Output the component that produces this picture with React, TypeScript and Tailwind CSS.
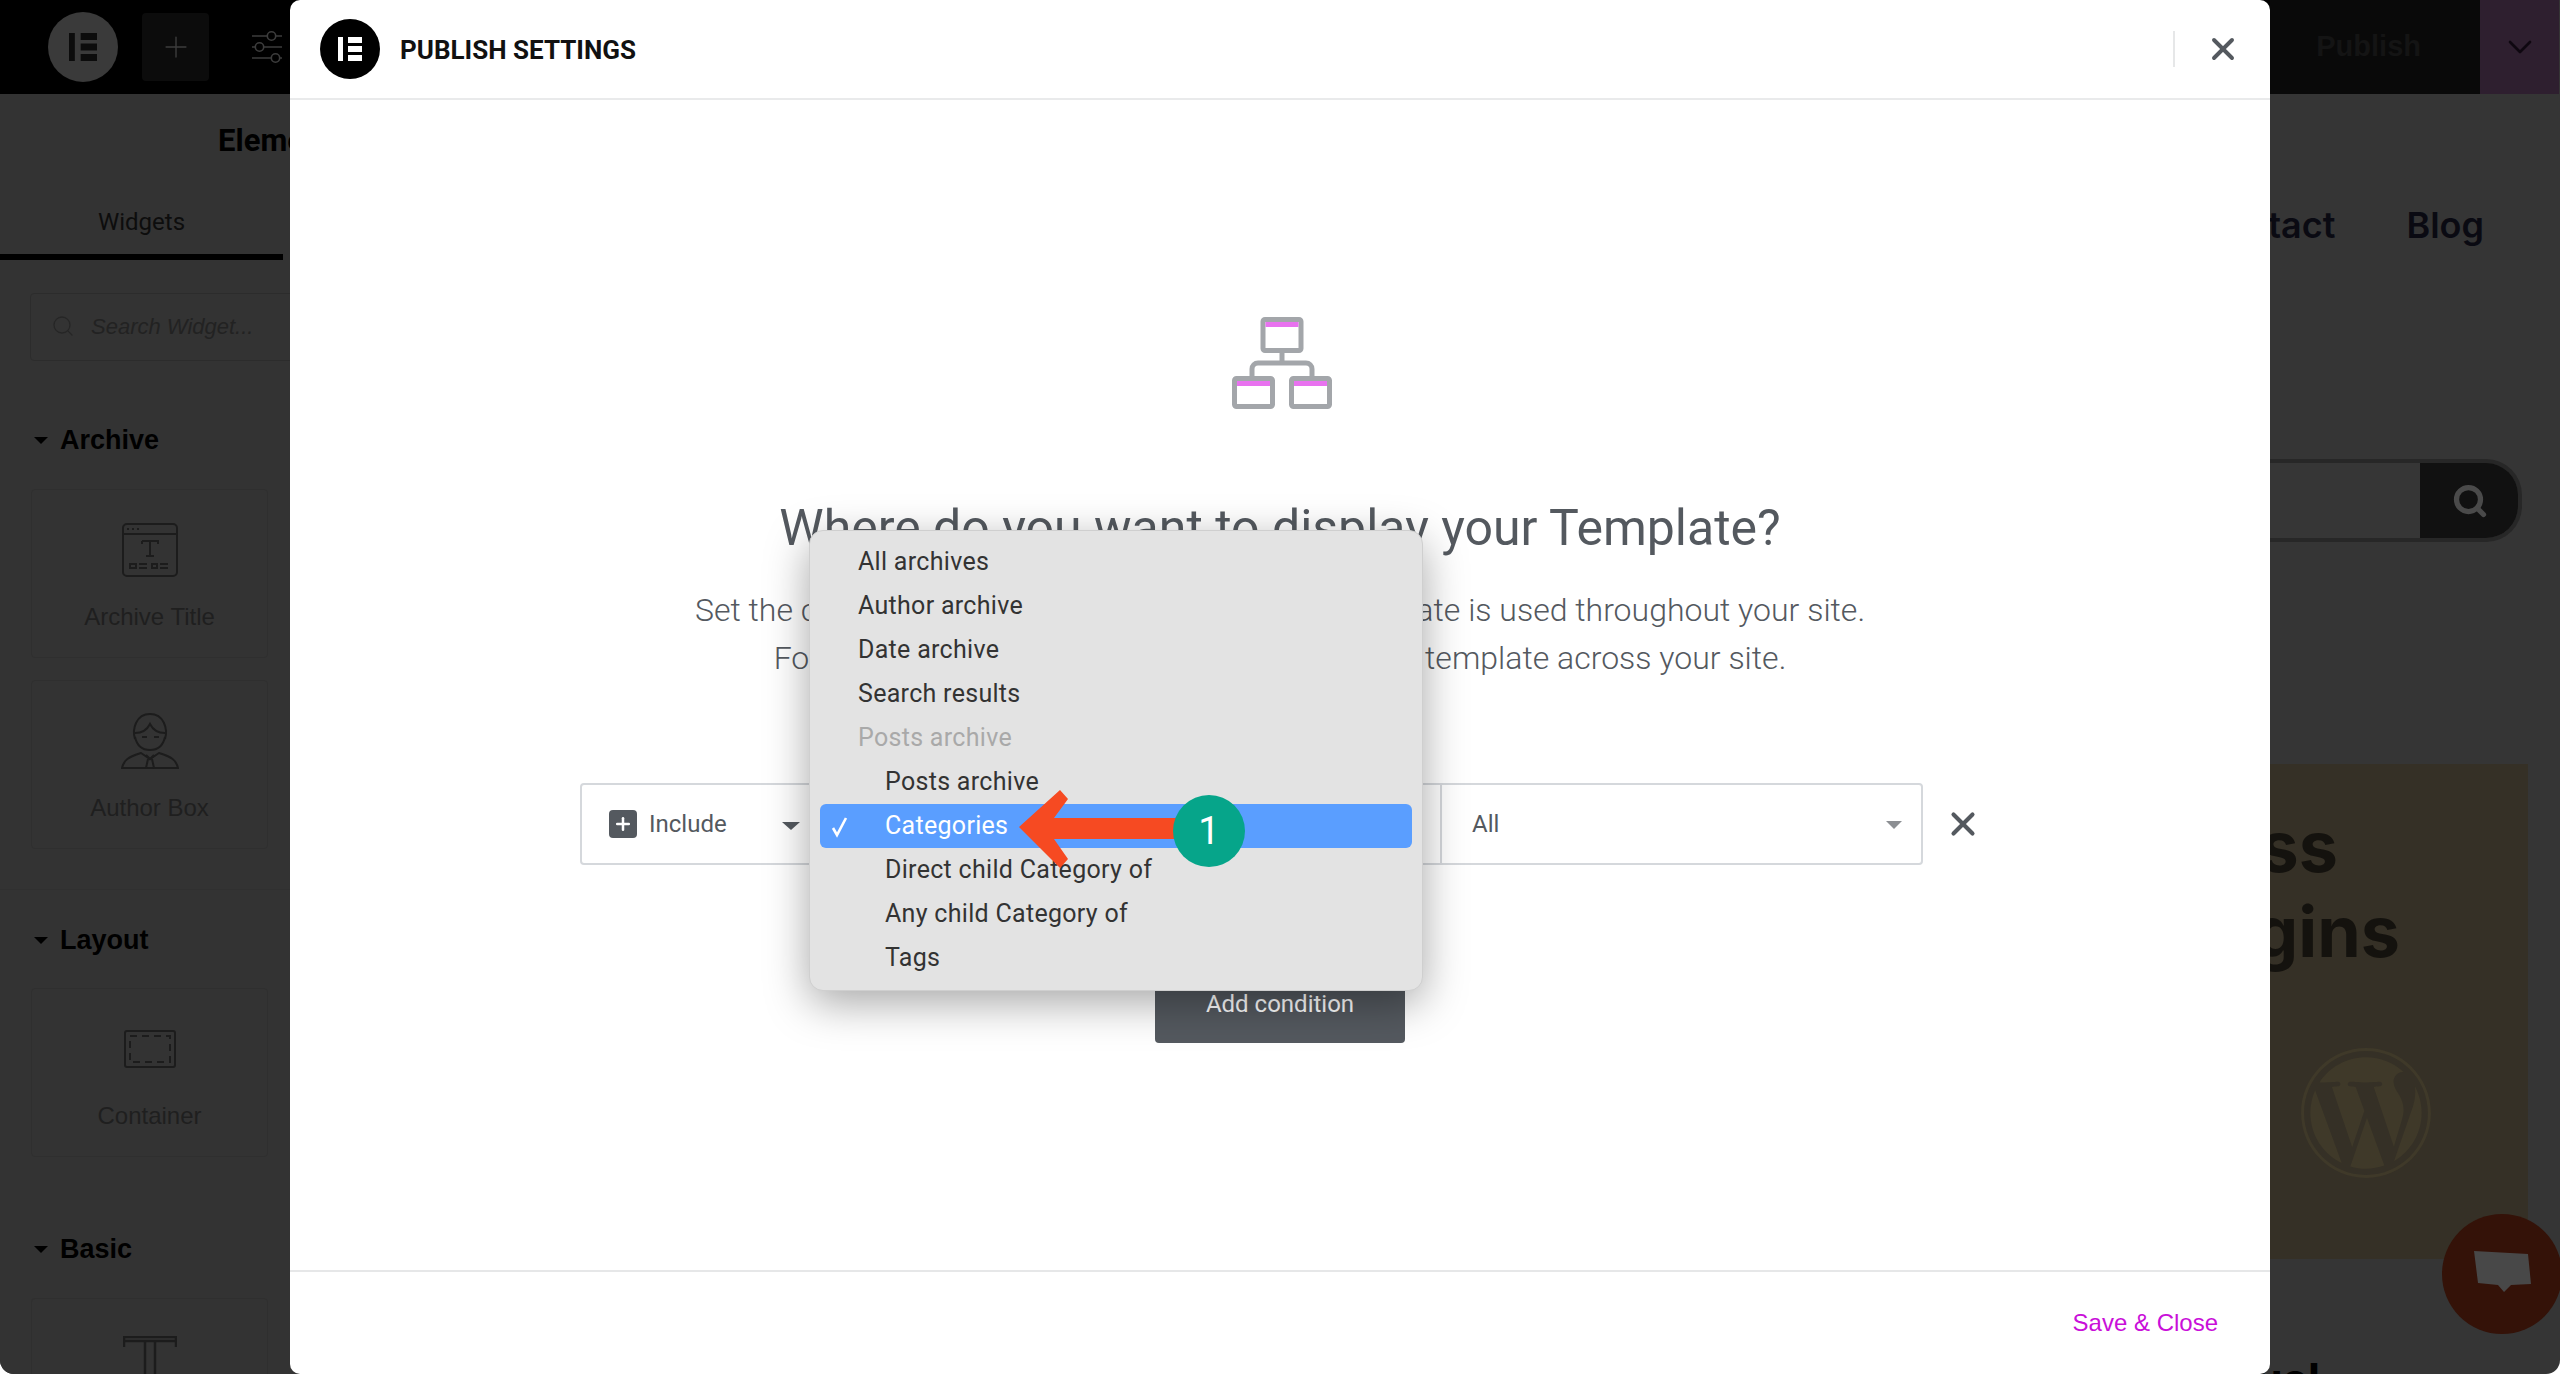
import { FaWordpress } from 'react-icons/fa';
import { ChevronDown, Plus, Search, X } from 'lucide-react';

function ElementorLogo({ size, bg, fg }: { size: number; bg: string; fg: string }) {
  return (
    <svg width={size} height={size} viewBox="0 0 60 60">
      <circle cx="30" cy="30" r="30" fill={bg} />
      <rect x="18" y="18" width="5" height="24" fill={fg} />
      <rect x="28" y="18" width="14" height="6" fill={fg} />
      <rect x="28" y="27" width="14" height="6" fill={fg} />
      <rect x="28" y="36" width="14" height="6" fill={fg} />
    </svg>
  );
}

function SectionTitle({ label }: { label: string }) {
  return (
    <div className="flex h-10 items-center pl-[34px]">
      <span className="h-0 w-0 border-x-[7px] border-t-[7px] border-x-transparent border-t-black" />
      <span className="ml-[12px] text-[27px] font-bold text-black font-['Liberation_Sans',sans-serif]">{label}</span>
    </div>
  );
}

function WidgetCard({ label, children }: { label: string; children: React.ReactNode }) {
  return (
    <div className="ml-[31px] flex h-[169px] w-[237px] flex-col items-center rounded border border-[#2f2f2f] pt-[32px]">
      <div className="flex h-[56px] items-center justify-center">{children}</div>
      <div className="mt-[24px] text-[24px] leading-[30px] text-[#1f1f1f] font-['Liberation_Sans',sans-serif]">{label}</div>
    </div>
  );
}

function SlidersIcon() {
  return (
    <svg width="30" height="32" viewBox="0 0 30 32" fill="none" stroke="#3c3c3c" strokeWidth="1.6">
      <path d="M0 5h15M24 5h6M0 16h3M12 16h18M0 27h19M28 27h2" />
      <circle cx="19.5" cy="5" r="4.2" />
      <circle cx="7.5" cy="16" r="4.2" />
      <circle cx="23.5" cy="27" r="4.2" />
    </svg>
  );
}

function TitleIcon() {
  return (
    <svg width="56" height="54" viewBox="0 0 56 54" fill="none" stroke="#1c1c1c" strokeWidth="2">
      <rect x="1" y="1" width="54" height="52" rx="4" />
      <path d="M1 11h54M5 6h2M10 6h2M15 6h2" />
      <path d="M20 18h16v3M20 18v3M28 18v15M24 33h8" />
      <rect x="8" y="41" width="6" height="4" />
      <path d="M17 41h8M17 45h8M38 41h8M38 45h8" />
      <rect x="30" y="41" width="5" height="4" />
    </svg>
  );
}

function AuthorIcon() {
  return (
    <svg width="58" height="56" viewBox="0 0 58 56" fill="none" stroke="#1c1c1c" strokeWidth="2">
      <path d="M14 26c-3-10 1-25 15-25s18 15 15 25" />
      <path d="M14 20c6 0 12-3 15-9 3 6 9 9 15 9" />
      <path d="M14 24c2 9 8 13 15 13s13-4 15-13" />
      <path d="M21 24h5M33 24h5" />
      <path d="M1 55c2-8 6-11 19-15l9 6 9-6c13 4 17 7 19 15z" />
      <path d="M25 42l4 4 4-4M27 46l-2 9M31 46l2 9" />
    </svg>
  );
}

function ContainerIcon() {
  return (
    <svg width="52" height="38" viewBox="0 0 52 38" fill="none" stroke="#1c1c1c" strokeWidth="2">
      <rect x="1" y="1" width="50" height="36" rx="2" />
      <rect x="6" y="6" width="40" height="26" strokeDasharray="7 5" />
    </svg>
  );
}

function BigTextIcon() {
  return (
    <svg width="54" height="46" viewBox="0 0 54 46" fill="none" stroke="#1c1c1c" strokeWidth="2.5">
      <path d="M1 11V1h52v10M1 5h52M22 5v41M32 5v41" />
    </svg>
  );
}

function NetworkIcon() {
  return (
    <svg width="100" height="92" viewBox="0 0 100 92" fill="none">
      <path d="M50 33v12M20 60v-8a6 6 0 0 1 6-6h48a6 6 0 0 1 6 6v8" stroke="#a3a6aa" strokeWidth="5" />
      <rect x="31" y="2.5" width="38" height="31" rx="2" stroke="#a3a6aa" strokeWidth="5" />
      <rect x="2.5" y="61.5" width="38" height="28" rx="2" stroke="#a3a6aa" strokeWidth="5" />
      <rect x="59.5" y="61.5" width="38" height="28" rx="2" stroke="#a3a6aa" strokeWidth="5" />
      <rect x="33.5" y="5" width="33" height="5" fill="#e872ef" />
      <rect x="5" y="64" width="33" height="5" fill="#e872ef" />
      <rect x="62" y="64" width="33" height="5" fill="#e872ef" />
    </svg>
  );
}

function MenuRow({ label, child, muted, active }: { label: string; child?: boolean; muted?: boolean; active?: boolean }) {
  return (
    <div
      className={`relative mx-[10px] flex h-[44px] items-center rounded-md text-[25px] tracking-[0.3px] ${child ? 'pl-[65px]' : 'pl-[38px]'} ${
        active ? 'bg-[#5a9eff] text-white' : muted ? 'text-[#a9a9a9]' : 'text-[#333]'
      }`}
    >
      {active && (
        <svg className="absolute left-[11px] top-[12px]" width="18" height="22" viewBox="0 0 18 22" fill="none">
          <path d="M2 12l4 7L15 2" stroke="white" strokeWidth="2.6" />
        </svg>
      )}
      {label}
    </div>
  );
}

export default function App() {
  return (
    <div className="relative flex h-[1374px] w-full flex-col overflow-hidden rounded-b-[14px] bg-[#353535] font-['Roboto',sans-serif]">
      {/* top bar */}
      <div className="flex h-[94px] shrink-0 items-center bg-black">
        <div className="ml-[48px]">
          <ElementorLogo size={70} bg="#3a3a3a" fg="#0c0c0c" />
        </div>
        <div className="ml-[24px] flex h-[68px] w-[67px] items-center justify-center rounded bg-[#0c0c0c]">
          <Plus size={34} strokeWidth={1} className="text-[#3c3c3c]" />
        </div>
        <div className="ml-[43px]">
          <SlidersIcon />
        </div>
        <div className="flex-1" />
        <div className="flex h-full w-[210px] items-center justify-end bg-[#090909] pr-[59px] text-[29px] font-bold text-[#141414] font-['Liberation_Sans',sans-serif]">
          Publish
        </div>
        <div className="flex h-full w-[79px] items-center justify-center bg-[#2e1f2f]">
          <ChevronDown size={40} strokeWidth={1.6} className="text-[#0e0710]" />
        </div>
        <div className="h-full w-px bg-[#353535]" />
      </div>

      <div className="flex flex-1">
        {/* sidebar behind the modal */}
        <div className="w-[290px] shrink-0 overflow-hidden whitespace-nowrap bg-[#333333]">
          <div className="flex h-[94px] items-center pl-[218px] text-[31px] font-bold text-black">Elements</div>
          <div className="flex h-[72px] w-[283px] items-center justify-center border-b-[6px] border-black pt-[2px] text-[24px] text-[#0d0d0d]">
            Widgets
          </div>
          <div className="ml-[30px] mt-[33px] flex h-[68px] w-[300px] items-center rounded border border-[#2c2c2c] pb-[2px] pl-[20px]">
            <Search size={24} strokeWidth={1.3} className="text-[#262626]" />
            <span className="ml-[16px] text-[22px] italic text-[#222] font-['Liberation_Sans',sans-serif]">Search Widget...</span>
          </div>
          <div className="mt-[59px]">
            <SectionTitle label="Archive" />
          </div>
          <div className="mt-[29px] flex flex-col gap-[22px]">
            <WidgetCard label="Archive Title">
              <TitleIcon />
            </WidgetCard>
            <WidgetCard label="Author Box">
              <AuthorIcon />
            </WidgetCard>
          </div>
          <div className="mt-[40px] h-px bg-[#303030]" />
          <div className="mt-[30px]">
            <SectionTitle label="Layout" />
          </div>
          <div className="mt-[28px]">
            <WidgetCard label="Container">
              <ContainerIcon />
            </WidgetCard>
          </div>
          <div className="mt-[72px]">
            <SectionTitle label="Basic" />
          </div>
          <div className="mt-[29px]">
            <WidgetCard label="Heading">
              <BigTextIcon />
            </WidgetCard>
          </div>
        </div>

        {/* page preview behind the modal */}
        <div className="flex-1 overflow-hidden whitespace-nowrap font-['Inter',sans-serif]">
          <div className="flex h-[262px] items-center justify-end gap-[71px] pr-[76px] text-[36px] font-semibold text-[#0a0a12]">
            <span>Contact</span>
            <span>Blog</span>
          </div>
          <div className="ml-auto mr-[38px] mt-[103px] flex h-[83px] w-[600px] overflow-hidden rounded-r-[36px] border-4 border-l-0 border-[#272727] bg-[#363636]">
            <div className="flex-1" />
            <div className="flex w-[98px] items-center justify-center bg-[#111111] pl-[2px]">
              <Search size={36} strokeWidth={3.5} className="text-[#4a4a4a]" />
            </div>
          </div>
          <div className="ml-auto mr-[32px] mt-[222px] flex h-[495px] w-[700px] flex-col bg-[#353026] pt-[40px] text-[70px] font-bold leading-[85px] text-[#14120e]">
            <div className="pr-[190px] text-right">WordPress</div>
            <div className="pr-[128px] text-right">Plugins</div>
            <div className="mt-[72px] flex justify-end pr-[95px]">
              <FaWordpress size={134} className="text-[#3f3929]" />
            </div>
          </div>
          <div className="pr-[240px] pt-[95px] text-right text-[44px] font-bold leading-[50px] text-black">Manual</div>
        </div>
      </div>

      {/* chat bubble */}
      <div className="absolute left-[2442px] top-[1214px] flex h-[120px] w-[120px] items-center justify-center rounded-full bg-[#341208]">
        <svg width="58" height="46" viewBox="0 0 58 46">
          <path d="M1 0l54 3 3 30-20 1-7 7-6-7-20-2z" fill="#484848" />
        </svg>
      </div>

      {/* publish settings modal */}
      <div className="absolute left-[290px] top-0 flex h-[1374px] w-[1980px] flex-col rounded-[10px] bg-white">
        <div className="flex h-[100px] shrink-0 items-center border-b-2 border-[#e9eaeb] pl-[30px]">
          <ElementorLogo size={60} bg="#000000" fg="#ffffff" />
          <div className="ml-[20px] pt-[2px] text-[26px] font-bold text-[#111]">PUBLISH SETTINGS</div>
          <div className="flex-1" />
          <div className="h-[36px] w-[2px] bg-[#e6e7e8]" />
          <X size={36} strokeWidth={2.6} className="ml-[30px] mr-[29px] text-[#54595f]" />
        </div>

        <div className="flex flex-1 flex-col items-center overflow-hidden">
          <div className="ml-[3px] mt-[217px]">
            <NetworkIcon />
          </div>
          <div className="mt-[89px] text-[50px] leading-[60px] text-[#54595f]">Where do you want to display your Template?</div>
          <div className="mt-[29px] text-center text-[32px] font-light leading-[47.5px] text-[#54595f]">
            Set the conditions that determine where your Template is used throughout your site.
            <br />
            For example, choose 'Entire Site' to display the template across your site.
          </div>

          <div className="relative mt-[101px] flex w-[1400px] items-center">
            <div className="flex h-[82px] w-[1343px] shrink-0 rounded border-2 border-[#d5d8dc] text-[24px] text-[#54595f]">
              <div className="relative flex w-[240px] items-center pl-[27px]">
                <span className="flex h-[28px] w-[28px] items-center justify-center rounded bg-[#54595f]">
                  <Plus size={20} strokeWidth={3} className="text-white" />
                </span>
                <span className="ml-[12px]">Include</span>
                <span className="absolute left-[200px] top-[37px] h-0 w-0 border-x-[9px] border-t-[8px] border-x-transparent border-t-[#54595f]" />
              </div>
              <div className="flex-1 border-r-2 border-[#d5d8dc]" />
              <div className="relative flex w-[479px] items-center pl-[30px]">
                All
                <span className="absolute left-[444px] top-[36px] h-0 w-0 border-x-[8px] border-t-[8px] border-x-transparent border-t-[#8c8f93]" />
              </div>
            </div>
            <X size={38} strokeWidth={2.6} className="ml-[21px] shrink-0 text-[#54595f]" />

            {/* open select menu */}
            <div className="absolute left-[229px] top-[-253px] h-[461px] w-[614px] rounded-[14px] border border-[#cfcfcf] bg-[#e3e3e3] py-[9px] shadow-[0_12px_44px_rgba(0,0,0,0.35)]">
              <MenuRow label="All archives" />
              <MenuRow label="Author archive" />
              <MenuRow label="Date archive" />
              <MenuRow label="Search results" />
              <MenuRow label="Posts archive" muted />
              <MenuRow label="Posts archive" child />
              <MenuRow label="Categories" child active />
              <MenuRow label="Direct child Category of" child />
              <MenuRow label="Any child Category of" child />
              <MenuRow label="Tags" child />

              {/* annotation arrow and step badge */}
              <svg className="absolute left-[208px] top-[259px]" width="170" height="78" viewBox="0 0 170 78">
                <path d="M1 37L42 0l8 9-14 19h134v21H36l14 20-8 9z" fill="#f64a22" />
              </svg>
              <div className="absolute left-[363px] top-[264px] flex h-[72px] w-[72px] items-center justify-center rounded-full bg-[#06a58a] text-[38px] text-white">
                1
              </div>
            </div>
          </div>

          <div className="mt-[100px] flex h-[78px] w-[250px] items-center justify-center rounded-b bg-[#54595f] text-[24px] text-white">
            Add condition
          </div>
        </div>

        <div className="flex h-[104px] shrink-0 items-center justify-end border-t-2 border-[#e6e7e8] pr-[52px] text-[24px] text-[#c90fd9] font-['Liberation_Sans',sans-serif]">
          Save &amp; Close
        </div>
      </div>
    </div>
  );
}
